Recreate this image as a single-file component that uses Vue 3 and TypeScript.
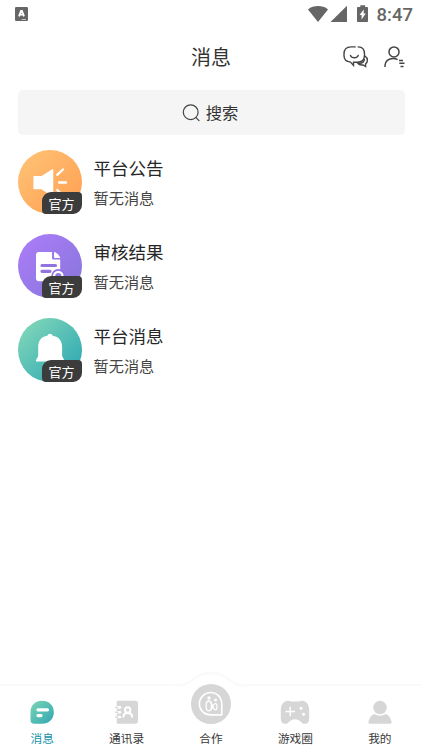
<script setup lang="ts">
import { ref } from 'vue'

type Kind = 'notice' | 'review' | 'platform'
interface Conversation { kind: Kind; name: string; preview: string }
interface Tab { key: string; label: string }

const conversations: Conversation[] = [
  { kind: 'notice', name: '平台公告', preview: '暂无消息' },
  { kind: 'review', name: '审核结果', preview: '暂无消息' },
  { kind: 'platform', name: '平台消息', preview: '暂无消息' },
]
const tabs: Tab[] = [
  { key: 'message', label: '消息' },
  { key: 'contacts', label: '通讯录' },
  { key: 'cooperate', label: '合作' },
  { key: 'games', label: '游戏圈' },
  { key: 'mine', label: '我的' },
]
const active = ref('message')
</script>

<template>
  <div class="screen">
    <div class="status">
      <svg class="app-mark" width="13" height="14" viewBox="0 0 13 14">
        <rect width="13" height="14" rx="1.2" fill="#666" />
        <path d="M4 9.400 6 4h1l2 5.400M4.800 7.700h3.400" fill="none" stroke="#fff" stroke-width="1.800" />
        <path d="M6.500 12.500H11" stroke="#ddd" stroke-width=".8" />
      </svg>
      <div class="status-right">
        <svg width="61" height="18" viewBox="0 0 61 18" fill="#666">
          <path d="M0 4.400C5.500 0 14.500 0 20 4.400L10 17Z" />
          <path d="M39 .8V17H22.500Z" />
          <path fill-rule="evenodd" d="M52.300.3h4.800v1.800h1.900c.6 0 1 .4 1 1v13c0 .6-.4 1-1 1h-9c-.6 0-1-.4-1-1v-13c0-.6.4-1 1-1h2.300ZM55.700 4.500l-4.200 5.400h2.100v4.700l4.100-6h-2Z" />
        </svg>
        <span class="time">8:47</span>
      </div>
    </div>

    <header class="header">
      <h1>消息</h1>
      <div class="actions">
        <svg width="26" height="22" viewBox="0 0 26 22" fill="none" stroke="#444" stroke-width="1.400" stroke-linecap="round">
          <path d="M12.200.9H8C3.500.9 1 3.500 1 8v1.500c0 3.800 2.300 6.200 6.500 6.600l3 3.300v-3.100h3.800c4.700 0 7.200-2.700 7.200-7.200V8C21.500 3.500 19 .9 15.200.9" />
          <path d="M7.500 9.400c1.300 3.100 6.400 3.100 7.700 0M22 10.200c3.300 2.200 2.900 6 .5 7.800l.1 2.500-2.600-1.600c-2.300.4-4.100-.1-5.400-1.900 3.400.8 6-.6 6.800-3.500" />
        </svg>
        <svg width="21" height="22" viewBox="0 0 21 22" fill="none" stroke="#444" stroke-width="1.500">
          <circle cx="10" cy="5.900" r="5" />
          <path d="M1 21v-1.500c0-4.200 3.600-7 8-7 1.900 0 3.300.4 4.600 1.200" />
          <path d="M15 14.400h4M15.300 17.300H20.500M16.500 20.500h3" />
        </svg>
      </div>
    </header>

    <div class="search">
      <svg width="18" height="18" viewBox="0 0 18 18" fill="none" stroke="#444" stroke-width="1.200" stroke-linecap="round">
        <circle cx="8.700" cy="8.200" r="7.400" />
        <path d="m14 13.700 3 3" />
      </svg>
      <span class="search-label">搜索</span>
    </div>

    <main class="list">
      <div v-for="item in conversations" :key="item.kind" class="item">
        <div class="avatar" :class="item.kind">
          <svg v-if="item.kind === 'notice'" width="64" height="64" viewBox="0 0 64 64" fill="#fff">
            <path d="M16 26h7.500L34.300 19.200q1-.5 1 .7v26q0 1.100-1 .5L23.500 39.300H16q-.6 0-.6-.6V26.500q0-.5.600-.5Z" />
            <path d="m39.200 24.800 5.800-5.300M41 32.500h7M39.200 40l5.800 5.300" fill="none" stroke="#fff" stroke-width="2.300" stroke-linecap="round" />
          </svg>
          <svg v-else-if="item.kind === 'review'" width="64" height="64" viewBox="0 0 64 64">
            <path d="M21 18h13v5.700c0 1.300.6 1.900 1.900 1.900h6.300v21.600H21c-2 0-3-1-3-3V21c0-2 1-3 3-3Z" fill="#fff" />
            <path d="M36 18.100c3 .7 5.500 3.300 6.300 5.900H37q-1 0-1-1Z" fill="#fff" />
            <path d="M24 31.500h13.500M24 37.300h8" stroke="#9074df" stroke-width="3.200" stroke-linecap="round" />
            <circle cx="40.300" cy="42" r="5" fill="#9678e2" stroke="#9074df" stroke-width="4" />
            <circle cx="40.300" cy="42" r="4.200" fill="#9678e2" stroke="#fff" stroke-width="2.300" />
          </svg>
          <svg v-else width="64" height="64" viewBox="0 0 64 64" fill="#fff">
            <path d="M29.300 17.800a2.800 2.800 0 0 1 5.400 0c6.200.9 9.400 5.300 9.400 11V38l2.200 4.200q.5 1.200-.7 1.200H18.700q-1.200 0-.7-1.200l2.200-4.200v-9.200c0-5.700 2.900-10.100 9.100-11Z" />
          </svg>
          <span class="badge">官方</span>
        </div>
        <div class="copy">
          <div class="name">{{ item.name }}</div>
          <div class="preview">{{ item.preview }}</div>
        </div>
      </div>
    </main>

    <nav class="tabbar">
      <svg class="bump" width="76" height="20" viewBox="0 0 76 20">
        <path d="M0 14.500c12 0 14-1.500 20-6 10-9.500 26-9.500 36 0 6 4.500 8 6 20 6V20H0Z" fill="#fff" />
        <path d="M0 13.500c12 0 14-1.500 20-6 10-8.800 26-8.800 36 0 6 4.500 8 6 20 6" fill="none" stroke="#fafafa" stroke-width="2.500" />
      </svg>
      <button v-for="tab in tabs" :key="tab.key" class="tab" :class="{ active: active === tab.key }" @click="active = tab.key">
        <span class="tab-icon">
          <svg v-if="tab.key === 'message'" width="24" height="24" viewBox="0 0 24 24">
            <defs>
              <linearGradient id="messageFill" x1="0" y1="0" x2="1" y2="1">
                <stop offset="0" stop-color="#7bd5b5" />
                <stop offset="1" stop-color="#32a6b2" />
              </linearGradient>
            </defs>
            <path d="M12 .8c6.800 0 11.800 4.700 11.800 11.500S18.800 23.800 12 23.800H4c-2.300 0-3.500-1.200-3.500-3.500v-8C.5 5.500 5.200.8 12 .8Z" fill="url(#messageFill)" />
            <path d="M8 9.800h9.500M8 15.600h3" stroke="#fff" stroke-width="3.200" stroke-linecap="round" />
          </svg>
          <svg v-else-if="tab.key === 'contacts'" width="26" height="24" viewBox="0 0 26 24" fill="none">
            <path d="M4 .8h17c2 0 3 1 3 3v17c0 2-1 3-3 3H4c-1 0-1.300-.6-1.300-1.500V2.300C2.700 1.400 3 .8 4 .8Z" fill="#d6d6d6" />
            <path d="M1.500 7.400h4.500M1.500 12.200h4.500M1.500 17h4.500" stroke="#fff" stroke-width="2.600" stroke-linecap="round" />
            <path d="M1.800 7.400H3.500M1.800 12.200H3.500M1.800 17H3.500" stroke="#d6d6d6" stroke-width="1.500" stroke-linecap="round" />
            <circle cx="13.700" cy="10" r="2.700" stroke="#fff" stroke-width="2" />
            <path d="M9.400 16.800c.3-5.300 8.400-5.300 8.700 0" stroke="#fff" stroke-width="2.100" stroke-linecap="round" />
          </svg>
          <svg v-else-if="tab.key === 'cooperate'" class="raised" width="40" height="40" viewBox="0 0 40 40" fill="none">
            <circle cx="20" cy="20" r="20" fill="#d6d6d6" />
            <path d="M30.400 30.900H20A11.200 11.200 0 1 1 30.800 20v10.500q0 .4-.4.4Z" stroke="#fff" stroke-width="1.600" stroke-linejoin="round" />
            <ellipse cx="17.800" cy="21.900" rx="2.700" ry="4.900" stroke="#fff" stroke-width="1.300" />
            <path d="M19.700 18c1.800 2.500 2.600 7.800 4.500 7.800 2.400 0 2.400-6.300.2-6.300-1.900 0-2.700 5.200-4.700 6.500" stroke="#fff" stroke-width="1.200" />
            <circle cx="18" cy="14" r="1.700" fill="#fff" />
            <circle cx="24.500" cy="16" r="1.500" fill="#fff" />
          </svg>
          <svg v-else-if="tab.key === 'games'" width="30" height="24" viewBox="0 0 30 24">
            <path d="M8 .8c2.200 0 3 .8 4.600.8h4.800c1.600 0 2.400-.8 4.600-.8 4.400 0 7.200 3.700 7.200 10v8c0 3-1.700 5-4.200 5-4 0-4.500-4.600-10-4.600s-6 4.600-10 4.600c-2.500 0-4.200-2-4.200-5v-8C.8 4.500 3.600.8 8 .8Z" fill="#d6d6d6" />
            <path d="M10.200 6.800v9.500M5.500 11.500h9.500" stroke="#fff" stroke-width="1.400" />
            <circle cx="21" cy="8.200" r="1.500" fill="#fff" />
            <circle cx="23.500" cy="14.300" r="1.500" fill="#fff" />
          </svg>
          <svg v-else width="24" height="24" viewBox="0 0 24 24" fill="#d6d6d6">
            <circle cx="12" cy="7.500" r="6.800" />
            <path d="M6.500 14.100c3.300 2.300 7.700 2.300 11 0 3.100 1.100 5.200 3.800 6 7.500.4 1.400-.4 2.200-1.500 2.200H2C.9 23.800.1 23 .5 21.600c.8-3.700 2.900-6.400 6-7.500Z" />
          </svg>
        </span>
        <span class="label">{{ tab.label }}</span>
      </button>
    </nav>
  </div>
</template>

<style>
body { margin: 0; background: #fff; }
</style>

<style scoped>
.screen {
  display: flex;
  flex-direction: column;
  width: 422px;
  height: 750px;
  overflow: hidden;
  background: #fff;
  color: #333;
  font-family: "Noto Sans CJK SC", sans-serif;
}
.screen * { box-sizing: border-box; }
svg { display: block; flex: none; }
.status {
  display: flex;
  justify-content: space-between;
  align-items: center;
  height: 28px;
  padding: 0 9px 0 15px;
}
.status-right { display: flex; align-items: center; gap: 8px; }
.time { padding-top: 1px; color: #666; font: 500 18.500px/28px Roboto, sans-serif; }
.header {
  display: grid;
  grid-template-columns: 1fr auto 1fr;
  align-items: center;
  height: 57px;
  padding: 0 17px;
}
h1 { grid-column: 2; margin: 0; font-size: 20px; line-height: 30px; font-weight: 400; }
.actions { display: flex; justify-content: flex-end; gap: 15px; }
.search {
  display: flex;
  align-items: center;
  justify-content: center;
  gap: 6px;
  height: 45px;
  margin: 5px 17.500px 0;
  padding-right: 2px;
  border-radius: 5px;
  background: #f5f5f5;
  font-size: 16.300px;
}
.search-label { padding-bottom: 2px; }
.list {
  display: flex;
  flex: 1;
  flex-direction: column;
  gap: 20px;
  padding: 15px 17px 0 17.500px;
}
.item { display: flex; gap: 12px; height: 64px; }
.avatar { position: relative; width: 64px; height: 64px; border-radius: 50%; }
.notice { background: linear-gradient(135deg, #ffc477, #ff9d50); }
.review { background: linear-gradient(135deg, #ad7dfa, #8575d8); }
.platform { background: linear-gradient(135deg, #88dbb8, #25a3b3); }
.badge {
  position: absolute;
  right: 0;
  bottom: 0;
  width: 40px;
  height: 22px;
  border-radius: 9px 4px 9px 4px;
  background: #3c3c3c;
  color: #fff;
  font-size: 13px;
  line-height: 23px;
  text-align: center;
}
.copy { display: flex; flex-direction: column; gap: 4px; padding-top: 5px; }
.name { color: #262626; font-size: 17.500px; line-height: 26px; }
.preview { color: #444; font-size: 15.200px; line-height: 24px; }
.tabbar {
  position: relative;
  display: flex;
  height: 66px;
  border-top: 2px solid #fafafa;
  background: #fff;
}
.bump { position: absolute; top: -14px; left: 173px; }
.tab {
  position: relative;
  display: flex;
  flex: 1;
  flex-direction: column;
  align-items: center;
  padding: 14px 0 0;
  border: 0;
  background: none;
  color: #383838;
  font: 11.700px/18px "Noto Sans CJK SC", sans-serif;
}
.tab-icon { display: flex; align-items: center; justify-content: center; height: 24px; }
.raised { position: relative; top: -8px; }
.label { margin-top: 5px; }
.active { color: #1691a8; }
</style>
